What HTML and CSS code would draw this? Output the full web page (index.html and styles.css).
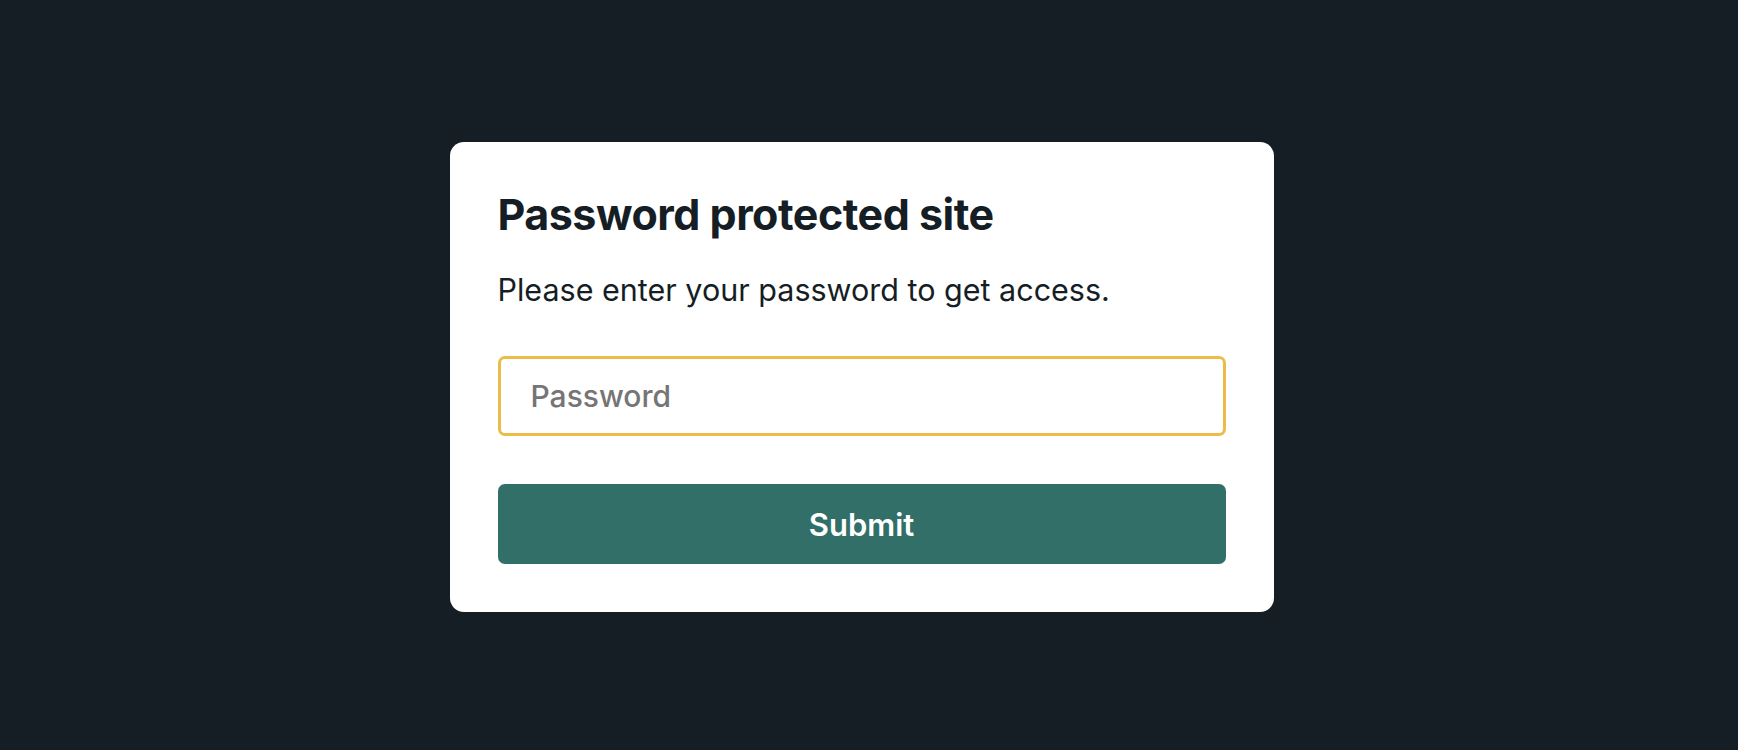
FILE: index.html
```html
<!DOCTYPE html>
<html lang="en">
<head>
<meta charset="utf-8">
<title>Password protected site</title>
<link rel="stylesheet" href="styles.css">
</head>
<body>
<main class="page">
  <form class="card">
    <h1 class="card-title">Password protected site</h1>
    <p class="card-text">Please enter your password to get access.</p>
    <input class="password-input" type="password" placeholder="Password">
    <button class="submit-btn" type="button">Submit</button>
  </form>
</main>
</body>
</html>
```
FILE: styles.css
```css
* { box-sizing: border-box; }
html, body { margin: 0; padding: 0; }
body {
  background: #161e25;
  font-family: Inter, "Noto Sans", "Liberation Sans", sans-serif;
  color: #161e25;
}
.page {
  min-height: 750px;
  display: flex;
  align-items: center;
  justify-content: center;
  padding-right: 15px;
  padding-top: 4px;
}
.card {
  width: 824px;
  background: #ffffff;
  border-radius: 14px;
  padding: 48px;
  display: flex;
  flex-direction: column;
}
.card-title {
  margin: 0;
  font-size: 43px;
  font-weight: 700;
  line-height: 48px;
  letter-spacing: -0.5px;
}
.card-text {
  margin: 32px 0 0;
  font-size: 30.5px;
  line-height: 40px;
  font-weight: 400;
}
.password-input {
  margin-top: 46px;
  height: 80px;
  width: 100%;
  border: 3.5px solid #ebbd48;
  border-radius: 7px;
  padding: 0 30px;
  font-family: inherit;
  font-size: 30px;
  color: #161e25;
  outline: none;
  background: #fff;
}
.password-input::placeholder { color: #757575; font-weight: 500; }
.submit-btn {
  margin-top: 48px;
  height: 80px;
  width: 100%;
  border: 0;
  border-radius: 7px;
  background: #326f68;
  color: #ffffff;
  font-family: inherit;
  font-size: 31px;
  font-weight: 600;
  cursor: pointer;
}
```
